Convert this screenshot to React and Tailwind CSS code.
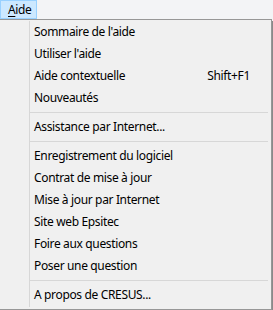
import React from 'react';

const groups = [
  [
    { label: "Sommaire de l'aide" },
    { label: "Utiliser l'aide" },
    { label: 'Aide contextuelle', shortcut: 'Shift+F1' },
    { label: 'Nouveautés' },
  ],
  [{ label: 'Assistance par Internet...' }],
  [
    { label: 'Enregistrement du logiciel' },
    { label: 'Contrat de mise à jour' },
    { label: 'Mise à jour par Internet' },
    { label: 'Site web Epsitec' },
    { label: 'Foire aux questions' },
    { label: 'Poser une question' },
  ],
  [{ label: 'A propos de CRESUS...' }],
];

function MenuItem({ label, shortcut }) {
  return (
    <div className="flex h-[22px] items-center pl-[4px] pr-[21px]">
      <span className="flex-1">{label}</span>
      {shortcut && <span>{shortcut}</span>}
    </div>
  );
}

function Separator() {
  return (
    <div className="flex h-[7px] items-center pr-[3px]">
      <div className="h-px w-full bg-[#d7d7d7]" />
    </div>
  );
}

export default function App() {
  return (
    <div
      className="relative h-[310px] w-[273px] overflow-hidden bg-[#f3f4f6] text-[12px] leading-none tracking-[-0.35px] text-black"
      style={{ fontFamily: '"Noto Sans", "Liberation Sans", sans-serif' }}
    >
      {/* Menu bar */}
      <div className="flex h-[19px]">
        <div className="flex h-[19px] w-[37px] items-center border border-[#99d1ff] bg-[#cce8ff] pl-[7px]">
          <span>
            <span className="underline underline-offset-2">A</span>ide
          </span>
        </div>
      </div>

      {/* Popup */}
      <div className="flex h-[291px] w-[273px]">
        <div className="flex h-full w-[272px] border-b border-r border-t border-[#979797] bg-[#f0f0f0] pt-px pb-[2px]">
          <div className="w-[30px] shrink-0 border-r border-[#d7d7d7]" />
          <div className="flex flex-1 flex-col">
            {groups.map((items, gi) => (
              <React.Fragment key={gi}>
                {gi > 0 && <Separator />}
                {items.map((it) => (
                  <MenuItem key={it.label} {...it} />
                ))}
              </React.Fragment>
            ))}
          </div>
        </div>
        <div className="mt-[2px] w-px bg-[#8a8a8a]" />
      </div>
    </div>
  );
}
